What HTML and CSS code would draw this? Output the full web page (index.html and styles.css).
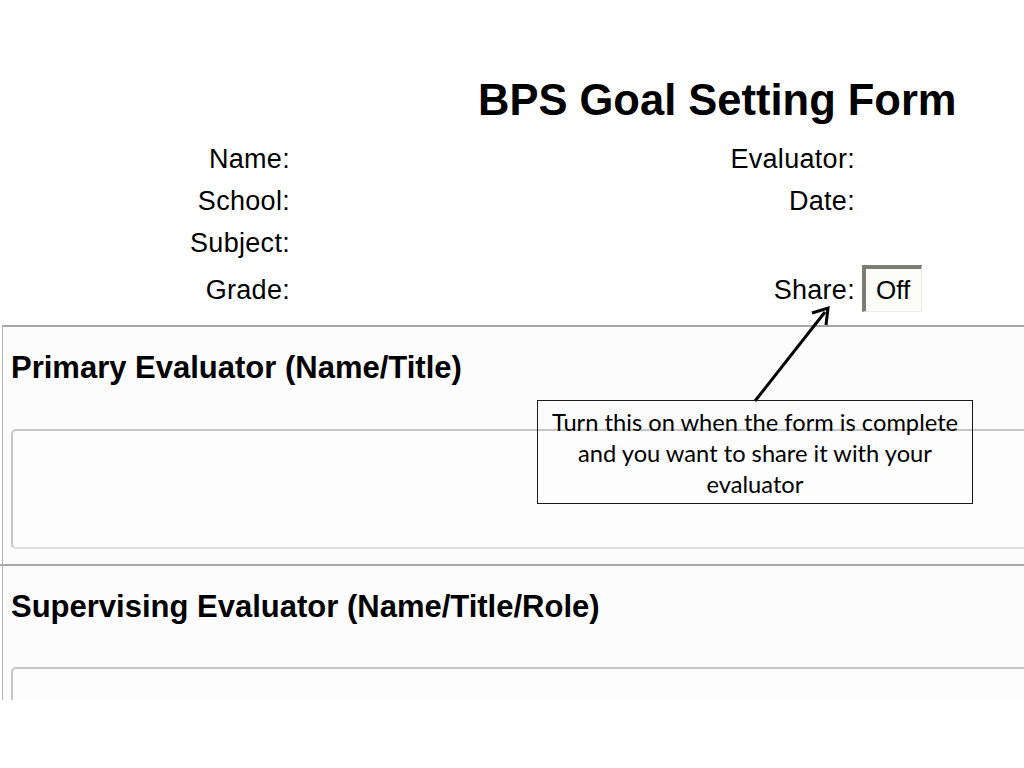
FILE: index.html
```html
<!doctype html>
<html>
    <head>
        <meta http-equiv="Content-Type" content="text/html; charset=utf-8">
        <link rel="stylesheet" href="styles.css">
    </head>
    <body>
        <div class="page">
            <h1 class="title">BPS Goal Setting Form</h1>
            <div class="fields">
                <div class="label">Name:</div>
                <div class="label">Evaluator:</div>
                <div></div>

                <div class="label">School:</div>
                <div class="label">Date:</div>
                <div></div>

                <div class="label">Subject:</div>
                <div></div>
                <div></div>

                <div class="label">Grade:</div>
                <div class="label">Share:</div>
                <div class="share">Off</div>
            </div>

            <div class="panel">
                <div class="section">
                    <h2 class="heading">Primary Evaluator (Name/Title)</h2>
                    <div class="box"></div>
                </div>
                <div class="section">
                    <h2 class="heading">Supervising Evaluator (Name/Title/Role)</h2>
                    <div class="box"></div>
                </div>
            </div>

            <!-- annotation over the form -->
            <svg class="arrow" width="100" height="110" viewBox="0 0 100 110">
                <line x1="15" y1="102" x2="85" y2="13" stroke="#000" stroke-width="3"/>
                <polyline points="72,14 88,9 86,26" fill="none" stroke="#000" stroke-width="3"/>
            </svg>
            <div class="callout">
                Turn this on when the form is complete and you want to share it with your evaluator
            </div>
        </div>
    </body>
</html>
```

FILE: styles.css
```css
body{
    margin: 0;
    background: #fff;
}
.page{
    width: 1024px;
    height: 700px;
    overflow: hidden;
    position: relative;
    font-family: "Liberation Sans", Arial, sans-serif;
    color: #000;
}
.title{
    margin: 0;
    padding: 75px 0 0 478px;
    font-size: 43.5px;
    line-height: 50px;
    font-weight: bold;
}
.fields{
    display: grid;
    grid-template-columns: 290px 565px 169px;
    grid-template-rows: 42px 42px 42px 47px;
    margin-top: 14px;
    font-size: 27px;
    line-height: 42px;
}
.label{
    text-align: right;
    align-self: end;
    margin-bottom: 1px;
    letter-spacing: 0.3px;
}
.share{
    width: 60px;
    height: 47px;
    box-sizing: border-box;
    margin-left: 7px;
    border-left: 4px solid #7d7d78;
    border-top: 4px solid #7d7d78;
    border-right: 1px solid #ececE6;
    border-bottom: 1px solid #ececE6;
    background: #fcfcf8;
    font-size: 26px;
    line-height: 42px;
    padding-left: 10px;
}
.panel{
    margin: 13px 0 0 2px;
    width: 1100px;
    border-top: 2px solid #a6a6a6;
    border-left: 1px solid #b4b4b4;
    background: #fcfcfc;
    height: 400px;
}
.section{
    padding: 23px 0 0 8px;
}
.section + .section{
    border-top: 2px solid #a8a8a8;
    margin-left: -3px;
    padding-left: 11px;
}
.heading{
    margin: 0;
    font-size: 31px;
    line-height: 36px;
    font-weight: bold;
}
.box{
    margin-top: 43px;
    margin-bottom: 15px;
    height: 120px;
    box-sizing: border-box;
    border: 2px solid #c6c6c6;
    border-bottom-color: #dedede;
    border-radius: 5px;
    background: #fdfdfd;
}
.section + .section .box{
    margin-top: 42px;
}
.arrow{
    position: absolute;
    left: 740px;
    top: 299px;
}
.callout{
    position: absolute;
    left: 537px;
    top: 400px;
    width: 436px;
    height: 104px;
    box-sizing: border-box;
    border: 1px solid #1a1a1a;
    padding: 6px 6px 0;
    text-align: center;
    font-family: Lato, "Liberation Sans", sans-serif;
    font-size: 23.7px;
    line-height: 31px;
}
```
